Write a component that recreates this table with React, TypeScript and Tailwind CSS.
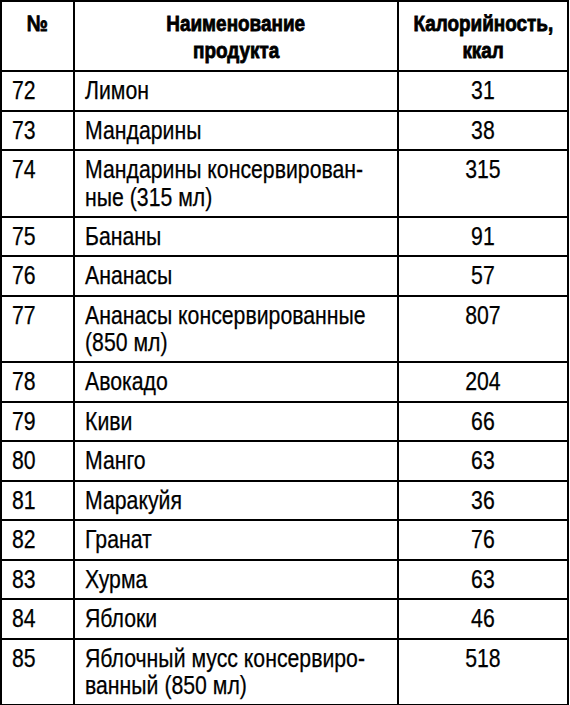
import React from "react";

interface Row {
  n: number;
  name: string[];
  kcal: number;
}

const rows: Row[] = [
  { n: 72, name: ["Лимон"], kcal: 31 },
  { n: 73, name: ["Мандарины"], kcal: 38 },
  { n: 74, name: ["Мандарины консервирован-", "ные (315 мл)"], kcal: 315 },
  { n: 75, name: ["Бананы"], kcal: 91 },
  { n: 76, name: ["Ананасы"], kcal: 57 },
  { n: 77, name: ["Ананасы консервированные", "(850 мл)"], kcal: 807 },
  { n: 78, name: ["Авокадо"], kcal: 204 },
  { n: 79, name: ["Киви"], kcal: 66 },
  { n: 80, name: ["Манго"], kcal: 63 },
  { n: 81, name: ["Маракуйя"], kcal: 36 },
  { n: 82, name: ["Гранат"], kcal: 76 },
  { n: 83, name: ["Хурма"], kcal: 63 },
  { n: 84, name: ["Яблоки"], kcal: 46 },
  { n: 85, name: ["Яблочный мусс консервиро-", "ванный (850 мл)"], kcal: 518 },
];

// condensed look: no narrow font installed, so squeeze the glyphs
function Narrow({ children, left }: { children: React.ReactNode; left?: boolean }) {
  return (
    <span
      className={
        left
          ? "inline-block whitespace-nowrap scale-x-[0.85] origin-left [-webkit-text-stroke:0.25px_black]"
          : "inline-block whitespace-nowrap scale-x-[0.85] origin-center [-webkit-text-stroke:0.25px_black]"
      }
    >
      {children}
    </span>
  );
}

function HeadText({ children }: { children: React.ReactNode }) {
  return (
    <span className="inline-block whitespace-nowrap scale-x-[0.86] origin-center [-webkit-text-stroke:0.8px_black]">
      {children}
    </span>
  );
}

export default function App() {
  return (
    <div className="w-[570px] h-[705px] bg-white text-black font-['Liberation_Sans',Arial,sans-serif]">
      <table className="w-[569px] border-collapse border-2 border-black table-fixed">
        <colgroup>
          <col className="w-[73px]" />
          <col className="w-[324px]" />
          <col />
        </colgroup>
        <thead>
          <tr className="h-[70px] text-[22px] leading-[26.5px] font-bold">
            <th className="border-2 border-black align-top pt-[9px] text-center">
              <HeadText>№</HeadText>
            </th>
            <th className="border-2 border-black align-top pt-[9px] text-center">
              <HeadText>Наименование</HeadText>
              <br />
              <HeadText>продукта</HeadText>
            </th>
            <th className="border-2 border-black align-top pt-[9px] text-center">
              <HeadText>Калорийность,</HeadText>
              <br />
              <HeadText>ккал</HeadText>
            </th>
          </tr>
        </thead>
        <tbody className="text-[25px] leading-[27.5px]">
          {rows.map((r) => {
            const tall = r.name.length > 1;
            return (
              <tr key={r.n} className={tall ? "h-[66.5px]" : "h-[39.5px]"}>
                <td className="border-2 border-black align-top pt-[5px] pl-[10px]">
                  <Narrow left>{r.n}</Narrow>
                </td>
                <td className="border-2 border-black align-top pt-[5px] pl-[10px]">
                  {r.name.map((line, i) => (
                    <div key={i}>
                      <Narrow left>{line}</Narrow>
                    </div>
                  ))}
                </td>
                <td className="border-2 border-black align-top pt-[5px] text-center">
                  <Narrow>{r.kcal}</Narrow>
                </td>
              </tr>
            );
          })}
        </tbody>
      </table>
    </div>
  );
}
